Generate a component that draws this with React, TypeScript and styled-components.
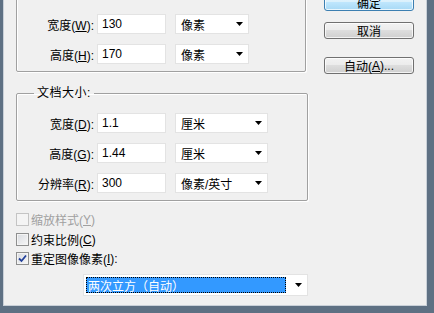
import React from 'react';
import styled, { createGlobalStyle } from 'styled-components';

const GlobalStyle = createGlobalStyle`
  html, body {
    margin: 0;
    padding: 0;
    overflow: hidden;
  }
  body {
    width: 434px;
    height: 313px;
    font-family: 'Liberation Sans', 'Noto Sans CJK SC', sans-serif;
    font-size: 12px;
    color: #000;
  }
`;

const Frame = styled.div`
  width: 434px;
  height: 313px;
  box-sizing: border-box;
  display: flex;
  padding: 0 7px 7px 3px;
  background: #5e7083;
`;

const Panel = styled.div`
  flex: 1;
  display: flex;
  overflow: hidden;
  background: #f0f0f0;
  border-left: 1px solid #c9d0d8;
  border-bottom: 1px solid #c9d0d8;
  border-right: 1px solid #c9d0d8;
`;

const Body = styled.div`
  flex: 1;
  display: flex;
  margin-top: -14px;
`;

const LeftColumn = styled.div`
  display: flex;
  flex-direction: column;
  padding-left: 12px;
`;

const RightColumn = styled.div`
  display: flex;
  flex-direction: column;
  margin-left: auto;
  margin-right: 12px;
  padding-top: 8px;
`;

const Group = styled.fieldset<{ $width: number; $gap?: number }>`
  width: ${(p) => p.$width}px;
  box-sizing: border-box;
  margin: ${(p) => p.$gap ?? 0}px 0 0 0;
  padding: 12px 0 7px 0;
  border: 1px solid #a0a0a0;
  border-radius: 2px;
  box-shadow: inset 1px 1px 0 #fff, 1px 1px 0 #fff;
  display: flex;
  flex-direction: column;
  gap: 10px;
`;

const Legend = styled.legend`
  margin-left: 17px;
  padding: 0 3px;
  line-height: 16px;
  letter-spacing: 0.5px;
`;

const Row = styled.div`
  display: flex;
  align-items: center;
  height: 20px;
`;

const Label = styled.span`
  width: 77px;
  margin-right: 3px;
  text-align: right;
  white-space: nowrap;
`;

const Field = styled.div`
  width: 69px;
  height: 20px;
  box-sizing: border-box;
  display: flex;
  align-items: center;
  padding-left: 4px;
  background: #fff;
  border: 1px solid #e3e3e3;
`;

const Select = styled.div<{ $width: number }>`
  width: ${(p) => p.$width}px;
  height: 20px;
  box-sizing: border-box;
  margin-left: 9px;
  display: flex;
  align-items: center;
  justify-content: space-between;
  padding: 0 5px 0 5px;
  background: #fff;
  border: 1px solid #e3e3e3;
`;

const Arrow = () => (
  <svg width="7" height="4" viewBox="0 0 7 4">
    <polygon points="0,0 7,0 3.5,4" fill="#000" />
  </svg>
);

const Button = styled.div<{ $default?: boolean; $gap?: number }>`
  width: 90px;
  height: 17px;
  box-sizing: border-box;
  margin-top: ${(p) => p.$gap ?? 0}px;
  display: flex;
  align-items: center;
  justify-content: center;
  border-radius: 3px;
  border: 1px solid ${(p) => (p.$default ? '#3c7fb1' : '#707070')};
  background: ${(p) =>
    p.$default
      ? 'linear-gradient(#eaf6fd, #d9f0fc 50%, #bee6fd 50%, #a7d9f5)'
      : 'linear-gradient(#f2f2f2, #ebebeb 50%, #dddddd 50%, #cfcfcf)'};
  box-shadow: inset 0 0 0 1px rgba(255, 255, 255, 0.75);
`;

const CheckRow = styled.div<{ $gap: number; $disabled?: boolean }>`
  display: flex;
  align-items: center;
  height: 17px;
  margin-top: ${(p) => p.$gap}px;
  color: ${(p) => (p.$disabled ? '#a0a0a0' : '#000')};
`;

const Box = styled.span<{ $disabled?: boolean }>`
  width: 13px;
  height: 13px;
  box-sizing: border-box;
  margin-right: 2px;
  display: flex;
  align-items: center;
  justify-content: center;
  border: 1px solid ${(p) => (p.$disabled ? '#c4c4c4' : '#8e8f8f')};
  background: ${(p) =>
    p.$disabled ? '#f4f4f4' : 'linear-gradient(135deg, #d8dbe0, #f7f7f7)'};
  box-shadow: inset 0 0 0 1px #f4f4f4;
`;

const Check = () => (
  <svg width="11" height="11" viewBox="0 0 11 11">
    <path d="M2 5.5 L4.5 8 L9 2.5" stroke="#22409a" strokeWidth="1.8" fill="none" />
  </svg>
);

const Dropdown = styled.div`
  width: 225px;
  height: 22px;
  box-sizing: border-box;
  margin: 7px 0 0 67px;
  display: flex;
  align-items: center;
  padding: 2px 5px 2px 2px;
  background: #fff;
  border: 1px solid #e3e3e3;
`;

const Highlight = styled.div`
  flex: 1;
  height: 16px;
  box-sizing: border-box;
  margin-right: 9px;
  padding-left: 2px;
  display: flex;
  align-items: center;
  background: #3399ff;
  color: #fff;
  outline: 1px dotted #000;
  outline-offset: -1px;
`;

const sizeRows = [
  { label: '宽度', key: 'W', value: '130', unit: '像素' },
  { label: '高度', key: 'H', value: '170', unit: '像素' },
];

const docRows = [
  { label: '宽度', key: 'D', value: '1.1', unit: '厘米' },
  { label: '高度', key: 'G', value: '1.44', unit: '厘米' },
  { label: '分辨率', key: 'R', value: '300', unit: '像素/英寸' },
];

export default function App() {
  return (
    <>
      <GlobalStyle />
      <Frame>
        <Panel>
          <Body>
            <LeftColumn>
              <Group $width={290}>
                <Legend>像素大小:</Legend>
                {sizeRows.map((r) => (
                  <Row key={r.key}>
                    <Label>
                      {r.label}(<u>{r.key}</u>):
                    </Label>
                    <Field>{r.value}</Field>
                    <Select $width={74}>
                      {r.unit}
                      <Arrow />
                    </Select>
                  </Row>
                ))}
              </Group>
              <Group $width={292} $gap={13}>
                <Legend>文档大小:</Legend>
                {docRows.map((r) => (
                  <Row key={r.key}>
                    <Label>
                      {r.label}(<u>{r.key}</u>):
                    </Label>
                    <Field>{r.value}</Field>
                    <Select $width={93}>
                      {r.unit}
                      <Arrow />
                    </Select>
                  </Row>
                ))}
              </Group>
              <CheckRow $gap={10} $disabled>
                <Box $disabled />
                缩放样式(<u>Y</u>)
              </CheckRow>
              <CheckRow $gap={3}>
                <Box />
                约束比例(<u>C</u>)
              </CheckRow>
              <CheckRow $gap={2}>
                <Box>
                  <Check />
                </Box>
                重定图像像素(<u>I</u>):
              </CheckRow>
              <Dropdown>
                <Highlight>两次立方（自动）</Highlight>
                <Arrow />
              </Dropdown>
            </LeftColumn>
            <RightColumn>
              <Button $default>确定</Button>
              <Button $gap={11}>取消</Button>
              <Button $gap={18}>
                自动(<u>A</u>)...
              </Button>
            </RightColumn>
          </Body>
        </Panel>
      </Frame>
    </>
  );
}
